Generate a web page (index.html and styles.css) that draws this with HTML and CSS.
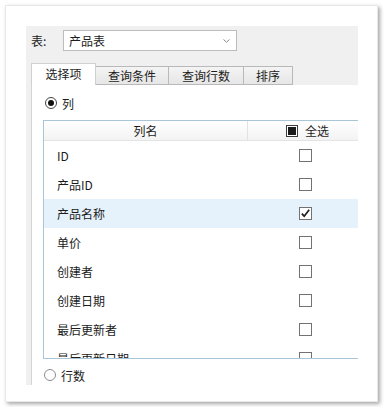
FILE: index.html
```html
<!DOCTYPE html>
<html lang="zh-CN">
<head>
    <meta charset="UTF-8">
    <title>查询设置</title>
    <link rel="stylesheet" href="styles.css">
</head>
<body>
    <div class="dialog">
        <div class="panel">
            <div class="table-pick">
                <span class="pick-label">表:</span>
                <div class="select">
                    <span>产品表</span>
                    <svg class="chevron" width="7" height="4" viewBox="0 0 7 4"><path d="M0.5 0.5 L3.5 3.2 L6.5 0.5" fill="none" stroke="#8a8a8a" stroke-width="1"/></svg>
                </div>
            </div>

            <div class="tabs">
                <div class="tab active">选择项</div>
                <div class="tab">查询条件</div>
                <div class="tab">查询行数</div>
                <div class="tab">排序</div>
            </div>

            <div class="tab-body">
                <label class="radio-row">
                    <span class="radio checked"></span>
                    <span>列</span>
                </label>

                <div class="grid">
                    <div class="grid-head">
                        <div class="col-name">列名</div>
                        <div class="col-check">
                            <span class="box partial"></span>
                            <span>全选</span>
                        </div>
                    </div>
                    <div class="grid-body">
                        <div class="grid-row"><div class="cell-name">ID</div><div class="cell-check"><span class="box"></span></div></div>
                        <div class="grid-row"><div class="cell-name">产品ID</div><div class="cell-check"><span class="box"></span></div></div>
                        <div class="grid-row selected"><div class="cell-name">产品名称</div><div class="cell-check"><span class="box"><svg width="11" height="11" viewBox="0 0 11 11"><path d="M1.8 5.6 L4.2 8.2 L9.2 1.8" fill="none" stroke="#1e1e1e" stroke-width="1.7"/></svg></span></div></div>
                        <div class="grid-row"><div class="cell-name">单价</div><div class="cell-check"><span class="box"></span></div></div>
                        <div class="grid-row"><div class="cell-name">创建者</div><div class="cell-check"><span class="box"></span></div></div>
                        <div class="grid-row"><div class="cell-name">创建日期</div><div class="cell-check"><span class="box"></span></div></div>
                        <div class="grid-row"><div class="cell-name">最后更新者</div><div class="cell-check"><span class="box"></span></div></div>
                        <div class="grid-row"><div class="cell-name">最后更新日期</div><div class="cell-check"><span class="box"></span></div></div>
                    </div>
                </div>

                <label class="radio-row bottom">
                    <span class="radio"></span>
                    <span>行数</span>
                </label>
            </div>
        </div>
    </div>
</body>
</html>
```

FILE: styles.css
```css
body {
    margin: 0;
    background: #fff;
    color: #1c1c1c;
    font-family: "Noto Sans CJK SC", "Noto Sans", sans-serif;
    font-size: 12px;
}

.dialog {
    margin: 5px;
    width: 373px;
    height: 397px;
    box-sizing: border-box;
    padding: 20px 0 0 20px;
    border: 1px solid #e8e8e8;
    box-shadow: 2px 2px 4px rgba(0, 0, 0, 0.35);
    background: #fff;
}

.panel {
    width: 332px;
    height: 359px;
    box-sizing: border-box;
    padding: 4px 0 0 5px;
    background: #f0f0f0;
    overflow: hidden;
}

.table-pick {
    display: flex;
    align-items: center;
    height: 21px;
}

.pick-label {
    width: 32px;
}

.select {
    width: 174px;
    height: 21px;
    box-sizing: border-box;
    border: 1px solid #bcbcbc;
    background: #fff;
    display: flex;
    align-items: center;
    justify-content: space-between;
    padding: 0 6px 0 5px;
}

.chevron {
    margin-top: 1px;
}

.tabs {
    display: flex;
    align-items: flex-end;
    height: 22px;
    margin-top: 12px;
}

.tab {
    height: 19px;
    box-sizing: border-box;
    border: 1px solid #b9b9b9;
    background: linear-gradient(#f4f4f4, #e6e6e6);
    display: flex;
    align-items: center;
    justify-content: center;
    margin-left: -1px;
}

.tab:nth-child(2) { width: 74px; }
.tab:nth-child(3) { width: 76px; }
.tab:nth-child(4) { width: 50px; }

.tab.active {
    width: 65px;
    height: 22px;
    margin-left: 0;
    background: #fff;
    border-color: #d0d0d0;
    border-bottom: none;
    padding-bottom: 2px;
    position: relative;
    z-index: 1;
}

.tab-body {
    height: 300px;
    background: #fff;
    border-left: 1px solid #d4d4d4;
    padding: 10px 0 0 11px;
    box-sizing: border-box;
}

.radio-row {
    display: flex;
    align-items: center;
    gap: 5px;
    height: 16px;
    margin-left: 2px;
}

.radio-row.bottom {
    margin-top: 8px;
    margin-left: 1px;
}

.radio {
    width: 12px;
    height: 12px;
    box-sizing: border-box;
    border: 1px solid #8c8c8c;
    border-radius: 50%;
    background: #fff;
    display: flex;
    align-items: center;
    justify-content: center;
}

.radio.checked {
    border-color: #444;
}

.radio.checked::after {
    content: "";
    width: 6px;
    height: 6px;
    border-radius: 50%;
    background: #111;
}

.grid {
    margin-top: 9px;
    width: 330px;
    border: 1px solid #a9c6d8;
}

.grid-head {
    display: flex;
    height: 20px;
    box-sizing: border-box;
    border-bottom: 1px solid #e4e4e4;
    background: linear-gradient(#fff, #f3f3f3);
}

.col-name {
    width: 203px;
    border-right: 1px solid #e2e2e2;
    display: flex;
    align-items: center;
    justify-content: center;
}

.col-check {
    flex: 1;
    display: flex;
    align-items: center;
    gap: 7px;
    padding-left: 38px;
}

.box {
    width: 13px;
    height: 13px;
    box-sizing: border-box;
    border: 1px solid #727272;
    background: #fff;
    display: flex;
    align-items: center;
    justify-content: center;
}

.box.partial {
    width: 12px;
    height: 12px;
    border-color: #3c3c3c;
}

.box.partial::after {
    content: "";
    width: 8px;
    height: 8px;
    background: #1a1a1a;
}

.grid-body {
    height: 217px;
    overflow: hidden;
}

.grid-row {
    display: flex;
    align-items: center;
    height: 29px;
}

.grid-row.selected {
    background: #e5f1fb;
}

.cell-name {
    width: 204px;
    padding-left: 13px;
    box-sizing: border-box;
}

.cell-check {
    padding-left: 51px;
}
```
